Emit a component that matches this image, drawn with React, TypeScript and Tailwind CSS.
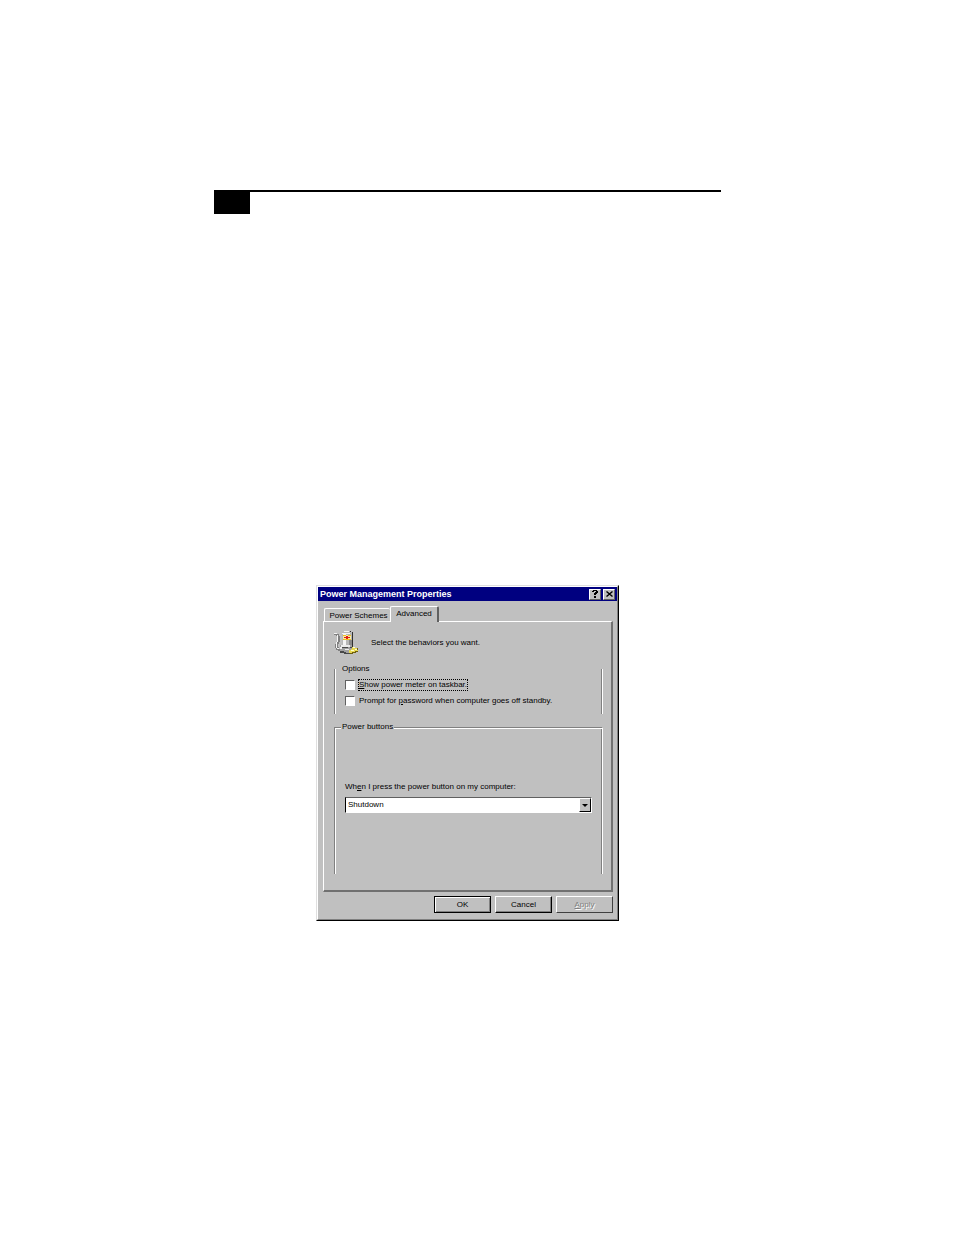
import type { ReactNode } from "react"

const options = [
  { id: "meter", before: "", hotkey: "S", after: "how power meter on taskbar.", focused: true },
  { id: "prompt", before: "Prompt for ", hotkey: "p", after: "assword when computer goes off standby.", focused: false },
]

function BatteryIcon() {
  return (
    <svg width="26" height="24" viewBox="0 0 26 24" shapeRendering="crispEdges" aria-hidden="true">
      {/* Cord */}
      <path d="M0 2h3v1h2v2h1v6h-1v2h-1v3h1v2h3v2h-4v-1h-2v-2h-1v-4h1v-2h1v-6h-1v-1h-2z" fill="#808080" />
      <path d="M0 2h3v1h-3zM3 4h1v7h-1zM2 11h1v6h-1zM3 17h2v1h-2z" fill="#f4f4f4" />
      {/* Battery */}
      <path d="M10 0h6v1h2v14h-10v-14h2z" fill="#b8b8b8" />
      <path d="M10 0h5v1h-5zM8 2h8v1h-8zM9 3h3v12h-3z" fill="#f4f4f4" />
      <path d="M15 9h3v6h-3z" fill="#888888" />
      <path d="M18 1h1v15h-1zM16 0h1v1h-1z" fill="#303030" />
      <path d="M9 4h8v5h-8z" fill="#f8eca8" />
      <path d="M9 4h3v1h-3zM14 4h3v1h-3zM9 8h8v1h-8z" fill="#f0c020" />
      <path d="M10 6h6v1h-6zM12 5h2v3h-2z" fill="#e02010" />
      {/* Base */}
      <path d="M6 14h12v3h2v3h-3v2h-7v-2h-4z" fill="#a0a0a0" />
      <path d="M7 14h9v2h-9zM6 16h2v2h-2zM11 18h4v1h-4z" fill="#ececec" />
      <path d="M6 20h4v1h2v1h5v1h-7v-1h-4zM16 16h3v1h-3zM8 16h6v1h-6z" fill="#484848" />
      {/* Plug */}
      <path d="M18 16h3v1h2v2h1v2h-3v1h-3v1h-2v-1h-1v-3h2v-1h1z" fill="#e8d850" />
      <path d="M19 16h2v1h-2zM17 19h3v1h-3zM21 18h2v1h-2z" fill="#ffffd0" />
      <path d="M21 20h3v1h-2v1h-3v1h-3v-1h2v-1h3zM23 17h1v2h-1z" fill="#706010" />
    </svg>
  )
}

function CaptionButton({ label, children }: { label: string; children: ReactNode }) {
  return (
    <button
      type="button"
      aria-label={label}
      className="flex h-[11px] w-3 items-center justify-center border border-t-white border-l-white border-r-[#606060] border-b-[#606060] bg-[#c0c0c0]"
    >
      {children}
    </button>
  )
}

function Group({ title, className, children }: { title: string; className: string; children: ReactNode }) {
  return (
    <fieldset className={`min-w-0 border-l border-r border-l-[#808080] border-r-white px-[10px] ${className}`}>
      <legend className="-ml-1 h-[10px] bg-[#c0c0c0] px-px">{title}</legend>
      {children}
    </fieldset>
  )
}

export default function App() {
  return (
    <main className="flex min-h-screen flex-col items-center bg-white pt-[190px] pr-[19px] font-['Liberation_Sans',Arial,sans-serif] text-[8px] leading-[10px] text-black">
      {/* Page header rule */}
      <header className="w-full max-w-[507px] border-t-2 border-black">
        <div className="h-[22px] w-9 bg-black" />
      </header>

      <section
        role="dialog"
        aria-labelledby="title"
        className="mt-[371px] w-full max-w-[303px] border border-t-[#dfdfdf] border-l-[#dfdfdf] border-r-black border-b-black bg-[#c0c0c0]"
      >
        <div className="border border-t-white border-l-white border-r-[#808080] border-b-[#808080]">
          <div className="flex h-[14px] items-center bg-[#000080] px-[2px] text-white">
            <h1 id="title" className="flex-1 text-[9px] font-bold whitespace-nowrap">Power Management Properties</h1>
            <div className="flex gap-[2px]">
              <CaptionButton label="Help">
                <svg width="6" height="8" viewBox="0 0 6 8" shapeRendering="crispEdges">
                  <path d="M1 0h4v1h1v2h-1v1h-1v1h-2v-2h1v-1h1v-1h-2v1h-2v-1h1zM2 6h2v2h-2z" fill="#000" />
                </svg>
              </CaptionButton>
              <CaptionButton label="Close">
                <svg width="7" height="6" viewBox="0 0 7 6">
                  <path d="M0.5 0.5l6 5M6.5 0.5l-6 5" stroke="#000" strokeWidth="1.4" />
                </svg>
              </CaptionButton>
            </div>
          </div>

          <div className="pt-[5px] pr-1 pb-[6px] pl-[5px]">
            {/* Tabs */}
            <div role="tablist" className="flex items-end pl-px">
              <button
                type="button"
                role="tab"
                aria-selected="false"
                className="h-[13px] w-[66px] rounded-t-xs border-t border-l border-white pt-px pl-[2px] whitespace-nowrap"
              >
                Power Schemes
              </button>
              <button
                type="button"
                role="tab"
                aria-selected="true"
                className="relative -mb-px h-4 w-[49px] rounded-t-xs border border-r-2 border-b-0 border-t-white border-l-white border-r-[#606060] bg-[#c0c0c0] pb-px"
              >
                Advanced
              </button>
            </div>

            <div
              role="tabpanel"
              className="border border-r-2 border-b-2 border-t-white border-l-white border-r-[#707070] border-b-[#707070] pt-[9px] pr-2 pb-4 pl-[10px]"
            >
              <div className="flex items-center gap-[11px]">
                <BatteryIcon />
                <p>Select the behaviors you want.</p>
              </div>

              <Group title="Options" className="mt-[9px] pt-[3px] pb-[5px] shadow-[inset_1px_0_#fff,inset_-1px_0_#808080]">
                {options.map((option) => (
                  <div key={option.id} className="flex h-4 items-center gap-[3px]">
                    <input
                      id={option.id}
                      type="checkbox"
                      className="size-[10px] shrink-0 appearance-none border border-t-[#606060] border-l-[#606060] border-r-white border-b-white bg-white checked:bg-black"
                    />
                    <label
                      htmlFor={option.id}
                      className={option.focused ? "border border-dotted border-black whitespace-nowrap" : "border border-transparent whitespace-nowrap"}
                    >
                      {option.before}
                      <u>{option.hotkey}</u>
                      {option.after}
                    </label>
                  </div>
                ))}
              </Group>

              <Group
                title="Power buttons"
                className="mt-2 border-t border-t-[#808080] pt-[50px] pb-[61px] shadow-[inset_1px_1px_#fff,inset_-1px_0_#808080]"
              >
                <label htmlFor="power-action" className="block">
                  Wh<u>e</u>n I press the power button on my computer:
                </label>
                <div className="mt-[5px] flex h-4 border border-t-[#606060] border-l-black border-r-white border-b-white bg-white">
                  <select id="power-action" className="min-w-0 flex-1 appearance-none bg-white pl-[2px] outline-none">
                    <option>Shutdown</option>
                  </select>
                  <span className="pointer-events-none flex w-3 items-center justify-center border border-t-white border-l-white border-r-black border-b-black bg-[#c0c0c0]">
                    <svg width="6" height="3" viewBox="0 0 6 3">
                      <path d="M0 0h6l-3 3z" fill="#000" />
                    </svg>
                  </span>
                </div>
              </Group>
            </div>

            {/* Dialog buttons */}
            <div className="mt-1 flex justify-end gap-1">
              <button type="button" className="h-[17px] w-[57px] border border-black shadow-[inset_1px_1px_#fff,inset_-1px_-1px_#808080]">
                OK
              </button>
              <button
                type="button"
                className="h-[17px] w-[57px] border border-t-white border-l-white border-r-black border-b-black shadow-[inset_-1px_-1px_#808080]"
              >
                Cancel
              </button>
              <button
                type="button"
                disabled
                className="h-[17px] w-[57px] border border-t-white border-l-white border-r-[#404040] border-b-[#404040] text-[#808080] text-shadow-[1px_1px_#fff]"
              >
                <u>A</u>pply
              </button>
            </div>
          </div>
        </div>
      </section>
    </main>
  )
}
